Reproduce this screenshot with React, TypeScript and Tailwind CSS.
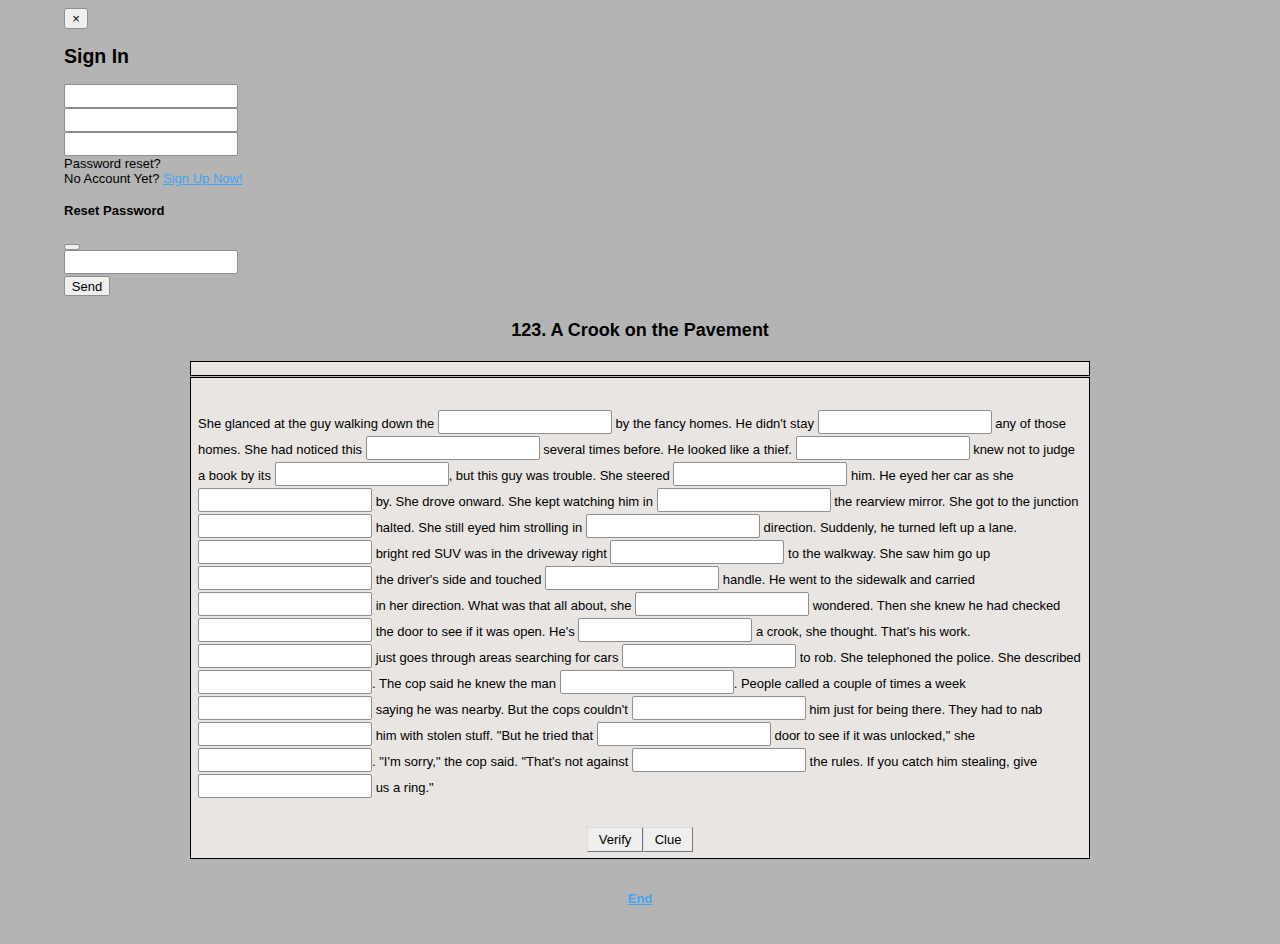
import React from 'react';

const story: string[] = [
  'She glanced at the guy walking down the',
  'by the fancy homes. He didn\'t stay',
  'any of those homes. She had noticed this',
  'several times before. He looked like a thief.',
  'knew not to judge a book by its',
  ', but this guy was trouble. She steered',
  'him. He eyed her car as she',
  'by. She drove onward. She kept watching him in',
  'the rearview mirror. She got to the junction',
  'halted. She still eyed him strolling in',
  'direction. Suddenly, he turned left up a lane.',
  'bright red SUV was in the driveway right',
  'to the walkway. She saw him go up',
  'the driver\'s side and touched',
  'handle. He went to the sidewalk and carried',
  'in her direction. What was that all about, she',
  'wondered. Then she knew he had checked',
  'the door to see if it was open. He\'s',
  'a crook, she thought. That\'s his work.',
  'just goes through areas searching for cars',
  'to rob. She telephoned the police. She described',
  '. The cop said he knew the man',
  '. People called a couple of times a week',
  'saying he was nearby. But the cops couldn\'t',
  'him just for being there. They had to nab',
  'him with stolen stuff. "But he tried that',
  'door to see if it was unlocked," she',
  '. "I\'m sorry," the cop said. "That\'s not against',
  'the rules. If you catch him stealing, give',
  'us a ring."',
];

const Blank = () => (
  <input
    type="text"
    className="relative -top-[3px] inline-block w-[174px] h-[24px] align-middle bg-white border border-[#8f8f8f] rounded-[2px]"
  />
);

const Field = () => (
  <input type="text" className="block w-[174px] h-[24px] bg-white border border-[#8f8f8f] rounded-[2px]" />
);

const Btn = ({ children, className = '' }: { children?: React.ReactNode; className?: string }) => (
  <button
    className={`bg-[#efefef] border border-t-[#dcdcdc] border-l-[#dcdcdc] border-r-[#767676] border-b-[#767676] text-[13px] text-black ${className}`}
  >
    {children}
  </button>
);

const App = () => {
  return (
    <div className="min-h-[944px] bg-[#b4b4b4] text-[13px] leading-[15px] text-black font-['Liberation_Sans',Arial,sans-serif] pb-8">
      <div className="px-16 pt-2">
        <button className="w-[24px] h-[21px] bg-[#efefef] border border-[#8f8f8f] rounded-[3px] text-[13px] leading-none">×</button>
        <h2 className="text-[19.5px] leading-[22px] font-bold mt-[16px]">Sign In</h2>
        <div className="mt-[17px]">
          <Field />
          <Field />
          <Field />
        </div>
        <div>Password reset?</div>
        <div>
          No Account Yet?{' '}
          <a href="#" className="text-[#42a5f5] underline">Sign Up Now!</a>
        </div>
        <h4 className="font-bold mt-[17px]">Reset Password</h4>
        <button className="block w-[16px] h-[6px] mt-[26px] bg-[#efefef] border border-[#8f8f8f] rounded-[3px]"></button>
        <Field />
        <button className="block mt-[2px] w-[46px] h-[20px] bg-[#efefef] border border-[#8f8f8f] rounded-[2px] text-[13px]">Send</button>
      </div>

      <h3 className="text-center text-[18px] leading-[21px] font-bold mt-[24px]">123. A Crook on the Pavement</h3>

      <div className="w-[900px] mx-auto mt-[20px]">
        <div className="h-[15px] border border-black bg-[#e8e5e2]"></div>
        <div className="mt-px border border-black bg-[#e8e5e2] px-[7px] pt-[33px] pb-[6px]">
          <p className="leading-[26px]">
            {story.map((s, i) => (
              <React.Fragment key={i}>
                {i > 0 && <Blank />}
                {i > 0 && !s.startsWith(',') && !s.startsWith('.') ? ' ' : ''}
                {s}
                {i < story.length - 1 ? ' ' : ''}
              </React.Fragment>
            ))}
          </p>
          <div className="flex justify-center mt-[26px]">
            <Btn className="w-[56px] h-[25px]">Verify</Btn>
            <Btn className="w-[50px] h-[25px]">Clue</Btn>
          </div>
        </div>
      </div>

      <div className="text-center mt-[32px]">
        <a href="#" className="font-bold text-[#42a5f5] underline">End</a>
      </div>
    </div>
  );
};

export default App;
